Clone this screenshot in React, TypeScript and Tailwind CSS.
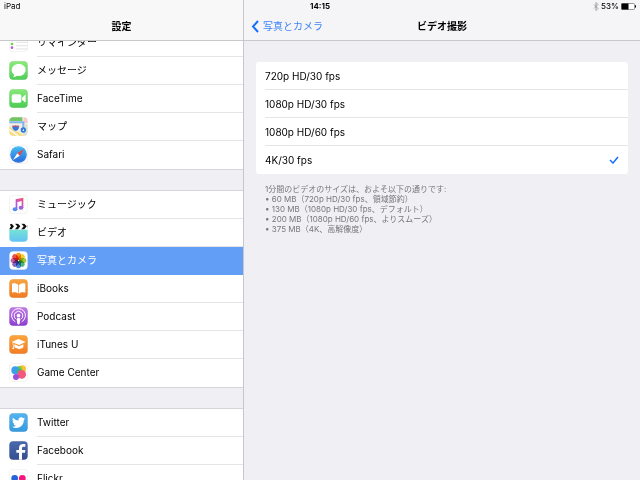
import React, { useState } from 'react'

const icon = 'w-[19px] h-[19px] mt-1 shrink-0 self-start'

function Tile({ from, to, children }: { from: string; to: string; children?: React.ReactNode }) {
  const id = 'tile' + from.slice(1) + to.slice(1)
  return (
    <svg className={icon} viewBox="0 0 57 57" aria-hidden="true">
      <defs>
        <linearGradient id={id} x1="0" y1="0" x2="0" y2="1">
          <stop offset="0" stopColor={from} />
          <stop offset="1" stopColor={to} />
        </linearGradient>
      </defs>
      <rect x="1" y="1" width="55" height="55" rx="12" fill={`url(#${id})`} stroke="#000" strokeOpacity="0.08" strokeWidth="2" />
      {children}
    </svg>
  )
}

function Reminders() {
  return (
    <Tile from="#ffffff" to="#fefefe">
      <circle cx="10" cy="12" r="3" fill="#f6a23a" />
      <circle cx="10" cy="22" r="3" fill="#3f9af5" />
      <circle cx="9" cy="33" r="4" fill="#6fd13c" />
      <circle cx="9" cy="44" r="4" fill="#b55be0" />
      <path d="M20 17H56M20 28H56M20 38H56M20 48H56" stroke="#d5d5d8" strokeWidth="2" />
    </Tile>
  )
}

function Messages() {
  return (
    <Tile from="#8bea7c" to="#4fcf57">
      <path d="M29 9C17 9 8 17 8 27c0 6 3 11 8 14 0 3-2 5-4 7 4 0 8-1 11-4 2 .5 4 .8 6 .8 12 0 21-8 21-18S41 9 29 9z" fill="#fff" />
    </Tile>
  )
}

function FaceTime() {
  return (
    <Tile from="#86e878" to="#4ccc55">
      <rect x="8" y="16" width="29" height="25" rx="5" fill="#fff" />
      <path d="M39 26l9-8c1-1 2 0 2 1v20c0 1-1 2-2 1l-9-8z" fill="#fff" />
    </Tile>
  )
}

function Maps() {
  return (
    <svg className={icon} viewBox="0 0 57 57" aria-hidden="true">
      <clipPath id="maps">
        <rect x="1" y="1" width="55" height="55" rx="12" />
      </clipPath>
      <g clipPath="url(#maps)">
        <rect width="57" height="57" fill="#f3eee0" />
        <path d="M0 0h40v12H0z" fill="#72c465" />
        <path d="M44 0h13v18H44z" fill="#f6c9cf" />
        <path d="M48 22h9v35H42z" fill="#d9e3d2" />
        <path d="M0 28l46 29H0z" fill="#f5dc7c" />
        <path d="M0 37l28 20" stroke="#fff" strokeWidth="4" />
        <path d="M0 16h43v24" stroke="#7fb6ee" strokeWidth="6" fill="none" />
        <path d="M10 24q5 3 10 0 5 3 10 0c3 10-1 16-10 19-9-3-13-9-10-19z" fill="#3b74d8" stroke="#fff" strokeWidth="2" />
        <path d="M11 25q5 3 9 0 5 3 9 0v4H11z" fill="#dd4b4b" />
        <circle cx="43" cy="39" r="8" fill="#2f78dc" />
        <path d="M43 35l3 7-3-1-3 1z" fill="#fff" />
      </g>
    </svg>
  )
}

function Safari() {
  return (
    <Tile from="#ffffff" to="#fdfdfd">
      <defs>
        <linearGradient id="compass" x1="0" y1="0" x2="0" y2="1">
          <stop offset="0" stopColor="#45bff5" />
          <stop offset="1" stopColor="#2668dc" />
        </linearGradient>
      </defs>
      <circle cx="28.500" cy="28.500" r="25" fill="url(#compass)" />
      <circle cx="28.500" cy="28.500" r="22" fill="none" stroke="#fff" strokeOpacity="0.4" strokeWidth="2" strokeDasharray="1 3" />
      <path d="M45 12L25 25l7 7z" fill="#f04438" />
      <path d="M12 45l13-20 7 7z" fill="#fff" />
    </Tile>
  )
}

function Music() {
  return (
    <Tile from="#fffffe" to="#fcfcfc">
      <defs>
        <linearGradient id="note" gradientUnits="userSpaceOnUse" x1="40" y1="8" x2="16" y2="50">
          <stop offset="0" stopColor="#fb5268" />
          <stop offset="0.500" stopColor="#b656da" />
          <stop offset="1" stopColor="#359af8" />
        </linearGradient>
      </defs>
      <g fill="url(#note)">
        <path d="M20 13l23-5v31h-5V18l-13 3v23h-5z" />
        <ellipse cx="18" cy="43" rx="7" ry="6" />
        <ellipse cx="36" cy="38" rx="7" ry="6" />
      </g>
    </Tile>
  )
}

function Videos() {
  return (
    <svg className={icon} viewBox="0 0 57 57" aria-hidden="true">
      <defs>
        <linearGradient id="clapper" x1="0" y1="0" x2="0" y2="1">
          <stop offset="0" stopColor="#74e3d6" />
          <stop offset="1" stopColor="#63c2f2" />
        </linearGradient>
        <clipPath id="videos">
          <rect x="1" y="1" width="55" height="55" rx="12" />
        </clipPath>
      </defs>
      <g clipPath="url(#videos)">
        <rect width="57" height="57" fill="#fff" />
        <rect y="20" width="57" height="37" fill="url(#clapper)" />
        <path d="M0 2h8l7 8-7 9H0l6-9zM18 2h9l7 8-7 9h-9l7-9zM37 2h9l7 8-7 9h-9l7-9zM55 2h2v17z" fill="#111" />
      </g>
    </svg>
  )
}

const petals = ['#f7931e', '#ecd02a', '#9fc93c', '#4db888', '#4f8dd8', '#8067c2', '#c65fa6', '#ee4e44']

function Photos() {
  return (
    <Tile from="#fffeff" to="#fefeff">
      {petals.map((color, i) => (
        <rect key={color} className="mix-blend-multiply" x="21" y="5" width="15" height="22" rx="7.500" fill={color} transform={`rotate(${i * 45} 28.500 28.500)`} />
      ))}
    </Tile>
  )
}

function IBooks() {
  return (
    <Tile from="#f9a33f" to="#f07a22">
      <path d="M28 18c-5-5-12-6-19-4v27c7-2 14-1 19 3z" fill="#fff" />
      <path d="M30 18c5-5 12-6 19-4v27c-7-2-14-1-19 3z" fill="#fff" />
    </Tile>
  )
}

function Podcast() {
  return (
    <Tile from="#c27ae8" to="#8c3fd0">
      <g fill="none" stroke="#fff" strokeWidth="3" strokeLinecap="round">
        <path d="M18 44a21 21 0 1 1 21 0" />
        <path d="M19 35a13 13 0 1 1 19 0" />
      </g>
      <circle cx="28.500" cy="26" r="5.500" fill="#fff" />
      <path d="M23 37c0-5 11-5 11 0l-2 13c-1 3-6 3-7 0z" fill="#fff" />
    </Tile>
  )
}

function ITunesU() {
  return (
    <Tile from="#fba63c" to="#f27d25">
      <path d="M28 12l22 9-20 9-22-9z" fill="#fff" />
      <path d="M16 28l14 6 13-6v9c-4 5-9 3-13 6-4-4-9-3-14-6z" fill="#fff" />
      <path d="M11 23l1 14-3 5h7l-2-5-1-13z" fill="#fff" />
    </Tile>
  )
}

function GameCenter() {
  return (
    <Tile from="#fefefe" to="#ffffff">
      <circle cx="40" cy="18" r="11" fill="#f6c22f" />
      <circle cx="31" cy="17" r="8" fill="#7bcb3e" />
      <circle cx="19" cy="22" r="12" fill="#3c9fee" />
      <circle cx="31" cy="25" r="8" fill="#3db37e" />
      <circle cx="38" cy="34" r="13" fill="#f2597c" />
      <circle cx="21" cy="42" r="9" fill="#9c4ed8" />
    </Tile>
  )
}

function Twitter() {
  return (
    <Tile from="#55b4f0" to="#359be0">
      <path
        transform="translate(9 9) scale(1.650)"
        d="M23.950 4.570a10 10 0 0 1-2.820.780 4.960 4.960 0 0 0 2.160-2.730c-.950.560-2 .960-3.130 1.190a4.920 4.920 0 0 0-8.380 4.480C7.690 8.100 4.070 6.130 1.640 3.160a4.820 4.820 0 0 0-.670 2.480c0 1.710.870 3.210 2.190 4.100a4.900 4.900 0 0 1-2.230-.620v.060a4.920 4.920 0 0 0 3.950 4.830 5 5 0 0 1-2.210.080 4.940 4.940 0 0 0 4.600 3.420A9.870 9.870 0 0 1 0 19.540a13.990 13.990 0 0 0 7.560 2.210c9.050 0 14-7.500 14-13.980 0-.210 0-.420-.020-.630a9.940 9.940 0 0 0 2.460-2.550z"
        fill="#fff"
      />
    </Tile>
  )
}

function Facebook() {
  return (
    <Tile from="#4a69ad" to="#354f90">
      <path d="M30 56V35h-8v-8h8v-6c0-8 5-12 12-12h7v8h-5c-4 0-5 2-5 5v5h10l-1 8h-9v21z" fill="#fff" />
    </Tile>
  )
}

function Flickr() {
  return (
    <Tile from="#fefffe" to="#fefeff">
      <circle cx="17" cy="28" r="10" fill="#2564d8" />
      <circle cx="40" cy="28" r="10" fill="#f7147f" />
    </Tile>
  )
}

const groups = [
  [
    { label: 'リマインダー', Icon: Reminders },
    { label: 'メッセージ', Icon: Messages },
    { label: 'FaceTime', Icon: FaceTime },
    { label: 'マップ', Icon: Maps },
    { label: 'Safari', Icon: Safari },
  ],
  [
    { label: 'ミュージック', Icon: Music },
    { label: 'ビデオ', Icon: Videos },
    { label: '写真とカメラ', Icon: Photos, active: true },
    { label: 'iBooks', Icon: IBooks },
    { label: 'Podcast', Icon: Podcast },
    { label: 'iTunes U', Icon: ITunesU },
    { label: 'Game Center', Icon: GameCenter },
  ],
  [
    { label: 'Twitter', Icon: Twitter },
    { label: 'Facebook', Icon: Facebook },
    { label: 'Flickr', Icon: Flickr },
  ],
]

const formats = ['720p HD/30 fps', '1080p HD/30 fps', '1080p HD/60 fps', '4K/30 fps']

const sizes = [
  '60 MB（720p HD/30 fps、領域節約）',
  '130 MB（1080p HD/30 fps、デフォルト）',
  '200 MB（1080p HD/60 fps、よりスムーズ）',
  '375 MB（4K、高解像度）',
]

function StatusBar() {
  return (
    <div className="absolute inset-x-0 top-0 h-3 px-1 grid grid-cols-3 items-center text-[8px] leading-3">
      <span>iPad</span>
      <span className="text-center font-bold">14:15</span>
      <span className="flex items-center justify-end gap-[2px] font-medium">
        <svg className="w-[6px] h-[9px]" viewBox="0 0 12 18" aria-hidden="true">
          <path d="M2 5l8 8-4 4V1l4 4-8 8" fill="none" stroke="#8a8a8e" strokeWidth="1.500" />
        </svg>
        53%
        <svg className="w-[15px] h-[7px]" viewBox="0 0 30 14" aria-hidden="true">
          <rect x="1" y="1" width="26" height="12" rx="2" fill="#fff" stroke="#777" strokeWidth="1.500" />
          <rect x="1" y="1" width="14" height="12" fill="#000" />
          <path d="M28 4c3 1 3 5 0 6z" fill="#000" />
        </svg>
      </span>
    </div>
  )
}

function Sidebar() {
  return (
    <aside className="w-[244px] shrink-0 flex flex-col border-r border-[#c6c6cd] bg-[#efeff4]">
      <header className="h-[41px] shrink-0 pt-3 flex items-center justify-center bg-[#f8f8f8] border-b border-[#c9c9cc]">
        <h1 className="text-[10px] font-bold">設定</h1>
      </header>
      <nav className="min-h-0 overflow-hidden">
        <div className="-mt-3 flex flex-col">
          {groups.map((group, i) => (
            <React.Fragment key={i}>
              {i > 0 && <div className="h-[22px] border-y border-[#d6d6da]"></div>}
              <ul className="bg-white">
                {group.map(({ label, Icon, active }: any, n) => (
                  <li key={label}>
                    <a href="#" className={active ? 'h-7 pl-[9px] flex items-center gap-[9px] bg-[#629df6] text-white' : 'h-7 pl-[9px] flex items-center gap-[9px]'}>
                      <Icon />
                      <span className={n < group.length - 1 && !active ? 'h-7 flex-1 leading-[27px] border-b border-[#e5e5e8]' : 'h-7 flex-1 leading-[27px]'}>{label}</span>
                    </a>
                  </li>
                ))}
              </ul>
            </React.Fragment>
          ))}
        </div>
      </nav>
    </aside>
  )
}

function App() {
  const [format, setFormat] = useState('4K/30 fps')

  return (
    <div className="relative h-screen flex overflow-hidden text-[10px] text-black font-[Inter,'Noto_Sans_CJK_JP',sans-serif]">
      <Sidebar />
      <main className="flex-1 min-w-0 bg-[#efeff4]">
        <header className="h-[41px] pt-3 px-[7px] grid grid-cols-[1fr_auto_1fr] items-center bg-[#f5f5f7] border-b border-[#c9c9cc]">
          <button className="flex items-center gap-1 text-[#3d83f7]">
            <svg className="w-[8px] h-[13px]" viewBox="0 0 8 13" aria-hidden="true">
              <path d="M7 1L2 6.500 7 12" fill="none" stroke="#1570fa" strokeWidth="2" />
            </svg>
            写真とカメラ
          </button>
          <h2 className="font-bold">ビデオ撮影</h2>
        </header>

        <div className="pt-[21px] px-3">
          <div role="radiogroup" aria-label="ビデオ撮影" className="bg-white rounded-[3px]">
            {formats.map((name) => (
              <label key={name} className="group block pl-[9px]">
                <span className="relative h-7 pt-px pr-[9px] flex items-center justify-between border-b border-[#e5e5e8] group-last:border-transparent">
                  {name}
                  <input type="radio" name="format" className="absolute inset-0 w-full h-full appearance-none" checked={format === name} onChange={() => setFormat(name)} />
                  {format === name && (
                    <svg className="w-[10px] h-[8px]" viewBox="0 0 10 8" aria-hidden="true">
                      <path d="M1 4l3 3 5-6" fill="none" stroke="#1570fa" strokeWidth="1.500" />
                    </svg>
                  )}
                </span>
              </label>
            ))}
          </div>

          <div className="mt-[10px] pl-[9px] text-[8px] leading-[10px] text-[#77777c]">
            <p>1分間のビデオのサイズは、およそ以下の通りです:</p>
            <ul>
              {sizes.map((size) => (
                <li key={size}>• {size}</li>
              ))}
            </ul>
          </div>
        </div>
      </main>
      <StatusBar />
    </div>
  )
}

export default App
